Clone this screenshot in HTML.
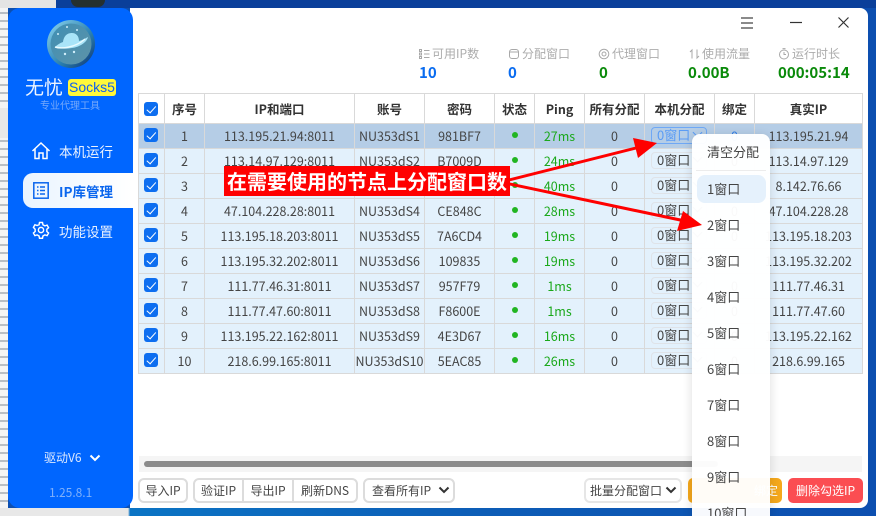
<!DOCTYPE html>
<html lang="zh"><head><meta charset="utf-8"><title>无忧 Socks5</title>
<style>
*{box-sizing:border-box;margin:0;padding:0}
html,body{width:876px;height:516px;overflow:hidden;background:#0d4fb0;font-family:"Noto Sans CJK SC","Liberation Sans",sans-serif;color:#333}
#root{position:absolute;left:0;top:0;width:876px;height:516px;overflow:hidden}
.a{position:absolute}
#win{left:130px;top:8px;width:738px;height:500px;background:#fff;border-radius:0 8px 8px 0}
#side{left:8px;top:8px;width:125px;height:500px;background:#0066ff;border-radius:12px;color:#fff}
.nav{position:absolute;left:59px;font-size:13.5px;line-height:20px;white-space:nowrap;color:#eaf2ff}
.lab{position:absolute;top:45px;font-size:12px;line-height:18px;color:#acacac;white-space:nowrap}
.val{position:absolute;top:63px;font-size:15px;line-height:20px;font-weight:700;white-space:nowrap}
table{position:absolute;left:138px;top:93px;width:724px;border-collapse:collapse;table-layout:fixed;font-size:12.5px;color:#444}
td,th{border:1px solid #d9d9d9;text-align:center;white-space:nowrap;overflow:hidden;height:25px;line-height:22px;padding:0}
th{height:30px;background:#fff;color:#333;font-weight:700;font-size:12.5px}
tr.r td{background:#e3f1fc}
tr.s td{background:#b5cde6}
.c{display:block;width:14px;height:14px;background:#0d6ef0;border-radius:3px;margin:-2px 0 0 5px;position:relative}
th .c{margin-top:0}
.c:after{content:"";position:absolute;left:4.5px;top:2px;width:4px;height:7.5px;border:solid #fff;border-width:0 1.2px 1.2px 0;transform:rotate(42deg)}
.d{display:inline-block;width:6px;height:6px;border-radius:50%;background:#22b522;position:relative;top:-3px}
.g{color:#1aa81a}
.sel{display:block;margin:0 0 0 6px;width:56px;height:17px;border:1.5px solid #dfe3e8;border-radius:4px;font-size:13px;line-height:14px;text-align:left;padding-left:5px;color:#444;position:relative;top:-1px}
.sel:after{content:"";position:absolute;right:5px;top:1px;width:6px;height:6px;border:solid #5a6a7a;border-width:0 1.5px 1.5px 0;transform:rotate(45deg)}
.s .sel{border-color:#6fa8f5;color:#5a9cf5}
.s .sel:after{border-color:#5a9cf5}
.btn{position:absolute;top:478px;height:25px;border:2px solid #dcdcdc;border-radius:6px;background:#fff;font-size:12px;line-height:21px;text-align:center;color:#444;white-space:nowrap}
#menu{left:692px;top:134px;width:78px;height:390px;background:rgba(255,255,255,.97);border-radius:8px;box-shadow:0 2px 10px rgba(0,0,0,.14);font-size:13px;color:#444}
#menu div{position:absolute;left:15px;line-height:20px;white-space:nowrap}
#bn{left:224px;top:166px;width:286px;height:30px;background:#f00;color:#fff;font-size:20px;font-weight:700;line-height:29px;padding-left:3px;white-space:nowrap;letter-spacing:0}
</style></head><body><div id="root">
<!-- desktop background -->
<div class="a" style="left:0;top:0;width:56px;height:8px;background:#e4e4e4"></div>
<div class="a" style="left:56px;top:0;width:820px;height:8px;background:#0a3f9a"></div>
<div class="a" style="left:71px;top:0;width:34px;height:7px;background:#25302f;border-radius:0 0 8px 8px"></div>
<div class="a" style="left:0;top:8px;width:8px;height:500px;background:repeating-linear-gradient(180deg,#f4f4f4 0,#f4f4f4 4px,#b9bec4 4px,#b9bec4 6px,#f4f4f4 6px,#f4f4f4 8px)"></div>
<div class="a" style="left:0;top:108px;width:8px;height:30px;background:#e8e8e8"></div>
<div class="a" style="left:0;top:508px;width:876px;height:8px;background:linear-gradient(90deg,#e8e8e8 0,#e8e8e8 128px,#0b74c4 130px,#0d5cb6 500px,#0d4fb0 100%)"></div>

<div class="a" id="win"></div>

<!-- sidebar -->
<div class="a" id="side"></div>
<svg class="a" style="left:47px;top:20px" width="48" height="48" viewBox="0 0 48 48">
<defs><linearGradient id="lg" x1="0" y1="0" x2="1" y2="1"><stop offset="0" stop-color="#8fd8f2"/><stop offset=".6" stop-color="#2a7fae"/><stop offset="1" stop-color="#0c2f70"/></linearGradient>
<linearGradient id="lf" x1="0" y1="0" x2="1" y2="1"><stop offset="0" stop-color="#3f8fb4"/><stop offset="1" stop-color="#5e93a8"/></linearGradient></defs>
<circle cx="24" cy="24" r="24" fill="url(#lg)"/><circle cx="24" cy="24" r="20.5" fill="url(#lf)"/>
<path d="M16 22c1-7 5-9 9-9s7 3 7 8c4-1 7-3 9-4-1 5-8 10-16 11-6 1-13 1-17-1 2-2 5-4 8-5z" fill="#a9e4f8"/>
<path d="M8 27c6 2 20 1 30-8" fill="none" stroke="#e9fbff" stroke-width="1.5"/>
<g fill="#cfeefa"><circle cx="20" cy="7" r="1"/><circle cx="30" cy="10" r="1"/><circle cx="11" cy="14" r="1"/><circle cx="18" cy="34" r="1.2"/><circle cx="27" cy="32" r="1.2"/></g>
</svg>
<div class="a" style="left:25px;top:75px;font-size:19px;line-height:24px;color:#eef5ff;white-space:nowrap">无忧</div>
<div class="a" style="left:68px;top:79px;width:48px;height:17px;background:#fff83a;border-radius:3px;color:#1060f0;font:14px/17px 'Liberation Sans',sans-serif;text-align:center">Socks5</div>
<div class="a" style="left:40px;top:97px;font-size:10px;line-height:15px;color:#76a9fb;white-space:nowrap">专业代理工具</div>

<svg class="a" style="left:31px;top:141px" width="20" height="20" viewBox="0 0 20 20" fill="none" stroke="#fff" stroke-width="1.5"><path d="M1.5 10 10 2l8.5 8M4 8v9.5h4v-5.5h4v5.500h4V8"/></svg>
<div class="nav" style="top:141px">本机运行</div>
<div class="a" style="left:23px;top:173px;width:110px;height:35px;background:linear-gradient(90deg,#e9f4ff,#fff);border-radius:10px 0 0 10px"></div>
<svg class="a" style="left:33px;top:182px" width="16" height="17" viewBox="0 0 16 17" fill="none" stroke="#0a66ee" stroke-width="1.5"><rect x=".8" y=".8" width="14.4" height="15.4"/><path d="M4 5h1.5M7 5h5M4 8.500h1.500M7 8.500h5M4 12h1.500M7 12h5"/></svg>
<div class="nav" style="top:181px;color:#0a66ee;font-weight:700">IP库管理</div>
<svg class="a" style="left:32px;top:221px" width="18" height="18" viewBox="0 0 24 24" fill="none" stroke="#fff" stroke-width="1.900"><circle cx="12" cy="12" r="3.500"/><path d="M10 2h4l.6 3 2.600 1.500 2.900-1 2 3.500-2.300 2v3l2.300 2-2 3.500-2.900-1-2.600 1.500-.6 3h-4l-.6-3-2.600-1.500-2.900 1-2-3.500 2.300-2v-3L1.900 8.500l2-3.500 2.900 1L9.400 5z"/></svg>
<div class="nav" style="top:221px">功能设置</div>
<div class="a" style="left:44px;top:449px;font-size:12px;line-height:18px;color:#dce9ff;white-space:nowrap">驱动V6</div>
<svg class="a" style="left:89px;top:454px" width="12" height="8" viewBox="0 0 12 8" fill="none" stroke="#fff" stroke-width="2"><path d="M1.500 1.500 6 6l4.500-4.500"/></svg>
<div class="a" style="left:49px;top:484px;font-size:12px;line-height:18px;color:#7fb0fb;white-space:nowrap">1.25.8.1</div>

<!-- title bar -->
<svg class="a" style="left:740px;top:16px" width="14" height="14" viewBox="0 0 14 14" stroke="#444" stroke-width="1.300"><path d="M1 2h12M1 7h12M1 12h12"/></svg>
<svg class="a" style="left:789px;top:21px" width="14" height="3" stroke="#333" stroke-width="1.200"><path d="M1 1.500h12"/></svg>
<svg class="a" style="left:837px;top:16px" width="13" height="13" viewBox="0 0 13 13" stroke="#333" stroke-width="1.200"><path d="M1.500 1.500 11.500 11.500M11.500 1.500 1.500 11.500"/></svg>

<!-- stats -->
<svg class="a" style="left:419px;top:48px" width="380" height="12" viewBox="0 0 380 12" fill="none" stroke="#a8a8a8" stroke-width="1">
<path d="M.5 1.500h2v2h-2zM.5 5h2v2h-2zM.5 8.500h2v2h-2zM5 2.500h5.500M5 6h5.500M5 9.500h5.500"/>
<rect x="90.500" y="1.500" width="9" height="9" rx="2.500"/><path d="M91 4h8"/>
<circle cx="185" cy="6" r="4.800"/><circle cx="185" cy="6" r="2"/>
<path d="M273 10.500V2l-2 2M278 1.500V10l2-2"/>
<circle cx="365" cy="6.500" r="4.500"/><path d="M363.500 .6h3M365 4v2.500h2"/>
</svg>
<div class="lab" style="left:432px">可用IP数</div><div class="val" style="left:419px;color:#0a6cf0">10</div>
<div class="lab" style="left:522px">分配窗口</div><div class="val" style="left:508px;color:#0a6cf0">0</div>
<div class="lab" style="left:612px">代理窗口</div><div class="val" style="left:599px;color:#0a8a0a">0</div>
<div class="lab" style="left:702px">使用流量</div><div class="val" style="left:688px;color:#0a8a0a">0.00B</div>
<div class="lab" style="left:792px">运行时长</div><div class="val" style="left:778px;color:#0a8a0a">000:05:14</div>

<!-- table -->
<table>
<colgroup><col style="width:26px"><col style="width:40px"><col style="width:150px"><col style="width:70px"><col style="width:70px"><col style="width:40px"><col style="width:50px"><col style="width:60px"><col style="width:70px"><col style="width:40px"><col style="width:108px"></colgroup>
<tr><th><i class="c"></i></th><th>序号</th><th>IP和端口</th><th>账号</th><th>密码</th><th>状态</th><th>Ping</th><th>所有分配</th><th>本机分配</th><th>绑定</th><th>真实IP</th></tr>
<tr class="s"><td><i class="c"></i></td><td>1</td><td>113.195.21.94:8011</td><td>NU353dS1</td><td>981BF7</td><td><i class="d"></i></td><td class="g">27ms</td><td>0</td><td><span class="sel">0窗口</span></td><td style="color:#2a7ae8">0</td><td>113.195.21.94</td></tr>
<tr class="r"><td><i class="c"></i></td><td>2</td><td>113.14.97.129:8011</td><td>NU353dS2</td><td>B7009D</td><td><i class="d"></i></td><td class="g">24ms</td><td>0</td><td><span class="sel">0窗口</span></td><td>0</td><td>113.14.97.129</td></tr>
<tr class="r"><td><i class="c"></i></td><td>3</td><td>8.142.76.66:8011</td><td>NU353dS3</td><td>A1C2E5</td><td><i class="d"></i></td><td class="g">40ms</td><td>0</td><td><span class="sel">0窗口</span></td><td>0</td><td>8.142.76.66</td></tr>
<tr class="r"><td><i class="c"></i></td><td>4</td><td>47.104.228.28:8011</td><td>NU353dS4</td><td>CE848C</td><td><i class="d"></i></td><td class="g">28ms</td><td>0</td><td><span class="sel">0窗口</span></td><td>0</td><td>47.104.228.28</td></tr>
<tr class="r"><td><i class="c"></i></td><td>5</td><td>113.195.18.203:8011</td><td>NU353dS5</td><td>7A6CD4</td><td><i class="d"></i></td><td class="g">19ms</td><td>0</td><td><span class="sel">0窗口</span></td><td>0</td><td>113.195.18.203</td></tr>
<tr class="r"><td><i class="c"></i></td><td>6</td><td>113.195.32.202:8011</td><td>NU353dS6</td><td>109835</td><td><i class="d"></i></td><td class="g">19ms</td><td>0</td><td><span class="sel">0窗口</span></td><td>0</td><td>113.195.32.202</td></tr>
<tr class="r"><td><i class="c"></i></td><td>7</td><td>111.77.46.31:8011</td><td>NU353dS7</td><td>957F79</td><td><i class="d"></i></td><td class="g">1ms</td><td>0</td><td><span class="sel">0窗口</span></td><td>0</td><td>111.77.46.31</td></tr>
<tr class="r"><td><i class="c"></i></td><td>8</td><td>111.77.47.60:8011</td><td>NU353dS8</td><td>F8600E</td><td><i class="d"></i></td><td class="g">1ms</td><td>0</td><td><span class="sel">0窗口</span></td><td>0</td><td>111.77.47.60</td></tr>
<tr class="r"><td><i class="c"></i></td><td>9</td><td>113.195.22.162:8011</td><td>NU353dS9</td><td>4E3D67</td><td><i class="d"></i></td><td class="g">16ms</td><td>0</td><td><span class="sel">0窗口</span></td><td>0</td><td>113.195.22.162</td></tr>
<tr class="r"><td><i class="c"></i></td><td>10</td><td>218.6.99.165:8011</td><td>NU353dS10</td><td>5EAC85</td><td><i class="d"></i></td><td class="g">26ms</td><td>0</td><td><span class="sel">0窗口</span></td><td>0</td><td>218.6.99.165</td></tr>
</table>

<!-- scrollbar -->
<div class="a" style="left:139px;top:456px;width:723px;height:16px;background:#f5f5f5"></div>
<div class="a" style="left:144px;top:461px;width:574px;height:6px;background:#8c8c8c;border-radius:3px"></div>

<!-- buttons -->
<div class="btn" style="left:138px;width:50px">导入IP</div>
<div class="btn" style="left:193px;width:51px;border-radius:6px 0 0 6px">验证IP</div>
<div class="btn" style="left:242px;width:52px;border-radius:0">导出IP</div>
<div class="btn" style="left:292px;width:66px;border-radius:0 6px 6px 0">刷新DNS</div>
<div class="btn" style="left:363px;width:92px;text-align:left;padding-left:7px">查看所有IP</div>
<svg class="a" style="left:438px;top:486px" width="12" height="8" viewBox="0 0 12 8" fill="none" stroke="#333" stroke-width="2"><path d="M1.500 1.500 6 6l4.500-4.500"/></svg>
<div class="btn" style="left:584px;width:98px;text-align:left;padding-left:4px;border-color:#e6e6e6">批量分配窗口</div>
<svg class="a" style="left:665px;top:486px" width="12" height="8" viewBox="0 0 12 8" fill="none" stroke="#333" stroke-width="2"><path d="M1.500 1.500 6 6l4.500-4.500"/></svg>
<div class="btn" style="left:688px;width:94px;background:#f5a81c;border:0;border-radius:5px;color:#fff;line-height:25px;text-align:right;padding-right:4px">绑定</div>
<div class="btn" style="left:788px;width:75px;background:#fb4d52;border:0;border-radius:5px;color:#fff;line-height:25px">删除勾选IP</div>

<!-- dropdown -->
<div class="a" id="menu">
<div style="top:8px">清空分配</div>
<span class="a" style="left:4px;top:36px;width:70px;height:1px;background:#ececec"></span>
<span class="a" style="left:5px;top:41px;width:69px;height:28px;background:#e5f1fc;border-radius:8px"></span>
<div style="top:45px">1窗口</div>
<div style="top:81px">2窗口</div>
<div style="top:117px">3窗口</div>
<div style="top:153px">4窗口</div>
<div style="top:189px">5窗口</div>
<div style="top:225px">6窗口</div>
<div style="top:261px">7窗口</div>
<div style="top:297px">8窗口</div>
<div style="top:333px">9窗口</div>
<div style="top:369px">10窗口</div>
</div>

<!-- annotation -->
<svg class="a" style="left:0;top:0" width="876" height="516" viewBox="0 0 876 516">
<path d="M505 181 640 147" stroke="#f00" stroke-width="3" fill="none"/>
<polygon points="657,143 633,138 638,158" fill="#f00"/>
<path d="M505 183 685 221" stroke="#f00" stroke-width="3" fill="none"/>
<polygon points="702,225 683,211 677,231" fill="#f00"/>
</svg>
<div class="a" id="bn">在需要使用的节点上分配窗口数</div>
</div></body></html>
